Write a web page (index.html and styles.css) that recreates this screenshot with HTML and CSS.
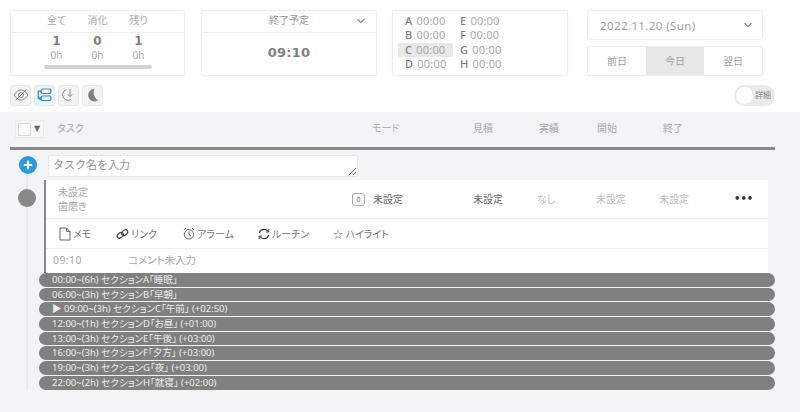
FILE: index.html
```html
<!DOCTYPE html>
<html lang="ja">
<head>
<meta charset="utf-8">
<title>タスク</title>
<link rel="stylesheet" href="styles.css">
</head>
<body>
<div class="top">
  <div class="cards">
    <section class="card count">
      <div class="count-head"><span>全て</span><span>消化</span><span>残り</span></div>
      <div class="count-nums"><b>1</b><b>0</b><b>1</b></div>
      <div class="count-hours"><span>0h</span><span>0h</span><span>0h</span></div>
      <div class="progress"></div>
    </section>
    <section class="card finish">
      <div class="finish-head"><span>終了予定</span>
        <svg class="chev" width="10" height="6" viewBox="0 0 10 6"><path d="M1.500 1.200 5 4.600l3.500-3.400" fill="none" stroke="#777" stroke-width="1.100"/></svg>
      </div>
      <div class="finish-time">09:10</div>
    </section>
    <section class="card times">
      <div class="time-grid">
        <div class="t"><b>A</b> 00:00</div><div class="t"><b>E</b> 00:00</div>
        <div class="t"><b>B</b> 00:00</div><div class="t"><b>F</b> 00:00</div>
        <div class="t on"><b>C</b> 00:00</div><div class="t"><b>G</b> 00:00</div>
        <div class="t"><b>D</b> 00:00</div><div class="t"><b>H</b> 00:00</div>
      </div>
    </section>
    <section class="datebox">
      <div class="card date"><span>2022.11.20 (Sun)</span>
        <svg class="chev" width="10" height="6" viewBox="0 0 10 6"><path d="M1.500 1.200 5 4.600l3.500-3.400" fill="none" stroke="#777" stroke-width="1.100"/></svg>
      </div>
      <div class="card days"><span>前日</span><span class="on">今日</span><span>翌日</span></div>
    </section>
  </div>
  <div class="tools">
    <div class="tool-group">
      <button class="tool"><svg width="16" height="14" viewBox="0 0 16 14" fill="none" stroke="#888" stroke-width="1"><path d="M1 7c2-3.400 4.300-5 7-5s5 1.600 7 5c-2 3.400-4.300 5-7 5S3 10.400 1 7Z"/><circle cx="8" cy="7" r="2.500"/><path d="M2.500 12.500 13.500 1.500"/></svg></button>
      <button class="tool active"><svg width="15" height="14" viewBox="0 0 15 14" fill="none" stroke="#3a87c4" stroke-width="1.200"><rect x="4" y="1" width="10" height="4.500" rx="1.500"/><rect x="4" y="8" width="10" height="4.500" rx="1.500"/><path d="M4 3.200H1.200v7.200H3M2.500 8.800l1.700 1.600-1.700 1.600"/></svg></button>
      <button class="tool"><svg width="14" height="16" viewBox="0 0 14 16" fill="none" stroke="#888" stroke-width="1"><path d="M4.500 2.500a5.500 5.500 0 0 0 0 10.500 5 5 0 0 0 4.500 -.5"/><path d="M8 2v7.500M5.800 7.300 8 9.600l2.200-2.300"/></svg></button>
      <button class="tool"><svg width="14" height="14" viewBox="0 0 14 14"><path d="M8.500 1A6.200 6.200 0 1 0 12 12.200 8.500 8.500 0 0 1 8.500 1Z" fill="#808080"/></svg></button>
    </div>
    <div class="toggle"><i></i><span>詳細</span></div>
  </div>
</div>

<div class="table-head">
  <div class="check"><i></i><em>▼</em></div>
  <span class="c-task">タスク</span>
  <span class="c-mode">モード</span>
  <span class="c-est">見積</span>
  <span class="c-act">実績</span>
  <span class="c-start">開始</span>
  <span class="c-end">終了</span>
</div>

<div class="body">
  <div class="add">
    <div class="plus"><svg width="10" height="10" viewBox="0 0 10 10"><path d="M5 .8v8.400M.8 5h8.400" stroke="#fff" stroke-width="2.200"/></svg></div>
    <textarea class="task-input" placeholder="タスク名を入力"></textarea>
  </div>
  <div class="timeline">
    <div class="dot"></div>
    <div class="task">
      <div class="row-main">
        <div class="names"><span>未設定</span><span>歯磨き</span></div>
        <div class="mode"><i>0</i><span>未設定</span></div>
        <span class="est">未設定</span>
        <span class="act">なし</span>
        <span class="start">未設定</span>
        <span class="end">未設定</span>
        <span class="more">•••</span>
      </div>
      <div class="row-actions">
        <span class="a-memo"><svg width="12" height="14" viewBox="0 0 12 14" fill="none" stroke="#666"><path d="M1 1h6.500L11 4.500V13H1ZM7.500 1v3.500H11"/></svg>メモ</span>
        <span class="a-link"><svg width="13" height="12" viewBox="0 0 13 12" fill="none" stroke="#444" stroke-width="1.200"><ellipse cx="4.300" cy="7.300" rx="3.400" ry="2.400" transform="rotate(-40 4.300 7.300)"/><ellipse cx="8.700" cy="4.700" rx="3.400" ry="2.400" transform="rotate(-40 8.700 4.700)"/></svg>リンク</span>
        <span class="a-alarm"><svg width="12" height="13" viewBox="0 0 12 13" fill="none" stroke="#666"><circle cx="6" cy="7.300" r="4.700"/><path d="M6 4.500v3l2 1M.8 3 3 1M11.200 3 9 1"/></svg>アラーム</span>
        <span class="a-routine"><svg width="12" height="12" viewBox="0 0 12 12" fill="none" stroke="#444" stroke-width="1.200"><path d="M1.300 5A4.800 4.800 0 0 1 10 3.500M10.700 7A4.800 4.800 0 0 1 2 8.500"/><path d="M10.800 1v3H8M1.200 11V8H4" stroke-width="1"/></svg>ルーチン</span>
        <span class="a-high">☆ ハイライト</span>
      </div>
      <div class="row-comment"><span>09:10</span><span>コメント未入力</span></div>
    </div>
    <div class="sections">
      <div class="sec">00:00~(6h) セクションA「睡眠」</div>
      <div class="sec">06:00~(3h) セクションB「早朝」</div>
      <div class="sec">▶ 09:00~(3h) セクションC「午前」 (+02:50)</div>
      <div class="sec">12:00~(1h) セクションD「お昼」 (+01:00)</div>
      <div class="sec">13:00~(3h) セクションE「午後」 (+03:00)</div>
      <div class="sec">16:00~(3h) セクションF「夕方」 (+03:00)</div>
      <div class="sec">19:00~(3h) セクションG「夜」 (+03:00)</div>
      <div class="sec">22:00~(2h) セクションH「就寝」 (+02:00)</div>
    </div>
  </div>
</div>
</body>
</html>
```
FILE: styles.css
```css
* { box-sizing: border-box; }
html, body { margin: 0; height: 412px; overflow: hidden; }
body {
  background: #f3f4f6;
  color: #999;
  font: 400 10px "Noto Sans", "Noto Sans CJK JP", sans-serif;
  font-feature-settings: "palt";
}
.top { background: #fff; height: 112px; padding: 10px 25px 0 10px; }
.cards { display: flex; height: 66px; }
.card { background: #fff; border: 1px solid #eeeef0; border-radius: 3px; box-shadow: 0 0 2px rgba(0,0,0,.04); }
.count { width: 175px; height: 66px; }
.count-head, .count-nums, .count-hours { display: grid; grid-template-columns: repeat(3, 41px); padding-left: 25px; text-align: center; }
.count-head { height: 22px; line-height: 18px; border-bottom: 1px solid #eeeef0; color: #aaa; }
.count-nums { margin-top: 1px; height: 15px; font: 700 12px/15px "DejaVu Sans", sans-serif; color: #808080; }
.count-hours { height: 13px; line-height: 13px; color: #aaa; }
.progress { width: 108px; height: 4px; margin: 3px 0 0 33px; background: #d2d2d2; border-radius: 2px; }
.finish { width: 176px; height: 66px; margin-left: 16px; }
.finish-head { display: flex; justify-content: center; position: relative; height: 22px; line-height: 18px; border-bottom: 1px solid #eeeef0; color: #999; }
.finish-head .chev { position: absolute; right: 10px; top: 7px; }
.finish-time { text-align: center; font: 700 13px/40px "DejaVu Sans", sans-serif; color: #808080; letter-spacing: .2px; }
.times { width: 176px; height: 66px; margin-left: 15px; padding: 3px 0 0 5px; }
.time-grid { display: grid; grid-template-columns: 55px 60px; grid-auto-rows: 14.300px; font-size: 11px; color: #aaa; letter-spacing: .2px; }
.t { padding-left: 7px; line-height: 14px; white-space: nowrap; }
.t b { color: #808080; font-weight: 500; margin-right: 1px; }
.t.on { background: #e8e8e8; border-radius: 2px; }
.datebox { width: 176px; margin-left: 19px; display: flex; flex-direction: column; gap: 6px; }
.date { height: 30px; display: flex; justify-content: space-between; align-items: center; padding: 0 9px 0 12px; font-size: 11.500px; letter-spacing: .4px; color: #a0a0a0; }
.days { height: 30px; display: grid; grid-template-columns: 1fr 1fr 1fr; overflow: hidden; text-align: center; line-height: 28px; color: #a0a0a0; }
.days .on { background: #e8e8e8; }
.tools { display: flex; justify-content: space-between; align-items: center; margin-top: 8px; height: 22px; }
.tool-group { display: flex; gap: 3px; }
.tool { width: 21px; height: 21px; padding: 0; display: flex; align-items: center; justify-content: center; background: #f3f3f3; border: 1px solid #e8e8e8; border-radius: 3px; }
.tool.active { background: #eef5fb; border-color: #dfe9f2; }
.toggle { width: 41px; height: 21px; border-radius: 11px; background: #eaeaea; position: relative; }
.toggle i { position: absolute; left: 2px; top: 2px; width: 17px; height: 17px; border-radius: 50%; background: #fff; }
.toggle span { position: absolute; left: 21px; top: 3px; font-size: 8px; line-height: 14px; color: #888; }
.table-head { position: relative; height: 38px; margin: 0 25px 0 10px; border-bottom: 3px solid #888; color: #aaa; }
.table-head span { position: absolute; top: 8px; line-height: 16px; }
.check { position: absolute; left: 5px; top: 8px; width: 29px; height: 18px; background: #f7f7f8; border: 1px solid #ebebeb; display: flex; align-items: center; padding-left: 2px; }
.check i { width: 13px; height: 13px; border: 1px solid #d8d8d8; background: #fbfbfb; }
.check em { font: normal 8px/1 "DejaVu Sans", sans-serif; color: #666; margin-left: 3px; }
.c-task { left: 47px; }
.c-mode { left: 362px; }
.c-est { left: 463px; }
.c-act { left: 529px; }
.c-start { left: 587px; }
.c-end { left: 653px; }
.add { display: flex; align-items: flex-start; height: 30px; padding: 5px 0 0 19px; gap: 11px; }
.plus { width: 18px; height: 18px; margin-top: 1px; border-radius: 50%; background: #2a9bdc; display: flex; align-items: center; justify-content: center; }
.task-input { width: 310px; height: 22px; min-height: 22px; padding: 0 4px; margin: 0; background: #fff; border: 1px solid #eaeaea; border-radius: 2px; font: 400 11px/17px "Noto Sans CJK JP", sans-serif; color: #777; outline: 0; }
.task-input::placeholder { color: #909090; opacity: 1; }
.timeline { position: relative; margin: -6px 0 0 26px; padding: 6px 0 0 2px; border-left: 2px solid #e8e9eb; height: 217px; width: 750px; }
.dot { position: absolute; left: -10px; top: 15px; width: 18px; height: 18px; border-radius: 50%; background: #888; }
.task { margin-left: 14px; width: 724px; background: #fff; border-left: 2px solid #888; height: 93px; }
.row-main { position: relative; height: 39px; border-bottom: 1px solid #eeeeef; color: #bbb; }
.row-main > span { position: absolute; top: 11px; line-height: 16px; }
.names { position: absolute; left: 12px; top: 5px; display: flex; flex-direction: column; line-height: 14px; color: #aaa; }
.mode { position: absolute; left: 306px; top: 11px; display: flex; align-items: center; gap: 8px; line-height: 16px; color: #666; }
.mode i { width: 13px; height: 13px; border: 1px solid #aaa; border-radius: 3px; font: normal 7px/11px "Noto Sans", sans-serif; text-align: center; color: #666; }
.row-main .est { left: 427px; color: #666; }
.row-main .act { left: 491px; }
.row-main .start { left: 550px; }
.row-main .end { left: 613px; }
.row-main .more { left: 688px; color: #333; font: 700 10px/16px "DejaVu Sans", sans-serif; letter-spacing: 0; }
.row-actions { height: 30px; display: grid; grid-template-columns: 57px 67px 75px 75px 100px; padding-left: 13px; align-items: center; border-bottom: 1px solid #eeeeef; color: #777; }
.row-actions span { display: flex; align-items: center; gap: 2px; white-space: nowrap; }
.row-comment { height: 23px; display: flex; gap: 25px; padding: 0 7px; line-height: 22px; color: #aaa; font-size: 10.500px; }
.row-comment span:first-child { width: 50px; letter-spacing: .4px; }
.sections { display: grid; gap: 1px; margin-left: 9px; grid-auto-rows: 13.700px; width: 736px; }
.sec { height: 13.700px; padding-left: 13px; background: #808080; border-radius: 7px; color: #eee; font-size: 9.500px; line-height: 14.700px; white-space: nowrap; }
```
